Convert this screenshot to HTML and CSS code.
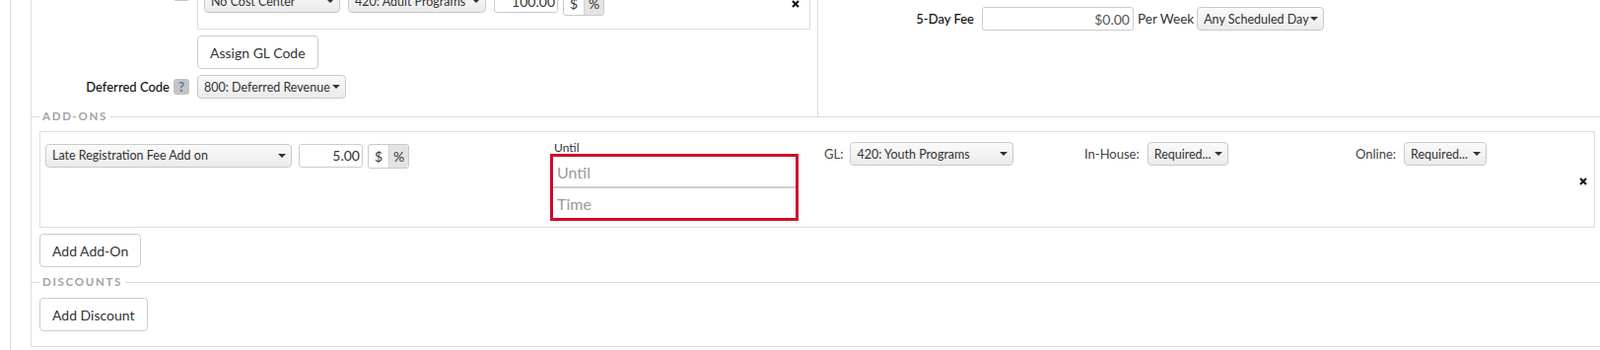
FILE: index.html
```html
<!DOCTYPE html>
<html lang="en">
<head>
  <meta charset="UTF-8" />
  <meta name="viewport" content="width=device-width, initial-scale=1.0" />
  <title>Program Fees</title>
  <link rel="stylesheet" href="styles.css">
</head>
<body>
  <div class="page">
    <div class="panel">
      <div class="top">
        <div class="col col-left">
          <div class="form-row row-gl">
            <div class="label"><span class="help">?</span></div>
            <div class="field">
              <div class="gl-box">
                <div class="controls">
                  <span class="select w-cost"><select><option>No Cost Center</option></select></span>
                  <span class="select w-prog"><select><option>420: Adult Programs</option></select></span>
                  <input class="amount" type="text" value="100.00">
                  <div class="toggle"><span>$</span><span class="on">%</span></div>
                </div>
                <span class="remove">
                  <svg viewBox="0 0 8 8"><path d="M1 1L7 7M7 1L1 7"/></svg>
                </span>
              </div>
              <button class="btn btn-assign">Assign GL Code</button>
            </div>
          </div>
          <div class="form-row row-deferred">
            <div class="label"><span>Deferred Code</span><span class="help">?</span></div>
            <div class="field">
              <span class="select w-def"><select><option>800: Deferred Revenue</option></select></span>
            </div>
          </div>
        </div>
        <div class="col col-right">
          <div class="fee-row">
            <div class="fee-label">5-Day Fee</div>
            <input class="fee-input" type="text" value="$0.00">
            <span class="per">Per Week</span>
            <span class="select w-day"><select><option>Any Scheduled Day</option></select></span>
          </div>
        </div>
      </div>

      <fieldset class="group group-addons">
        <legend>Add-ons</legend>
        <div class="addon">
          <div class="cell c-amount">
            <span class="select w-addon"><select><option>Late Registration Fee Add on</option></select></span>
            <input class="amount" type="text" value="5.00">
            <div class="toggle"><span>$</span><span class="on">%</span></div>
          </div>
          <div class="cell c-until">
            <label class="until-label">Until</label>
            <div class="until-box">
              <input type="text" placeholder="Until">
              <input type="text" placeholder="Time">
            </div>
          </div>
          <div class="cell c-gl">
            <span class="inline-label">GL:</span>
            <span class="select w-gl"><select><option>420: Youth Programs</option></select></span>
          </div>
          <div class="cell c-house">
            <span class="inline-label">In-House:</span>
            <span class="select w-req"><select><option>Required...</option></select></span>
          </div>
          <div class="cell c-online">
            <span class="inline-label">Online:</span>
            <span class="select w-req2"><select><option>Required...</option></select></span>
          </div>
          <span class="remove remove-addon">
            <svg viewBox="0 0 8 8"><path d="M1 1L7 7M7 1L1 7"/></svg>
          </span>
        </div>
        <button class="btn btn-addon">Add Add-On</button>
      </fieldset>

      <fieldset class="group group-discounts">
        <legend>Discounts</legend>
        <button class="btn btn-discount">Add Discount</button>
      </fieldset>
    </div>
  </div>
</body>
</html>
```

FILE: styles.css
```css
* { box-sizing: border-box; }

html, body {
  height: 100%;
  margin: 0;
  font-family: Lato, "Open Sans", sans-serif;
  font-size: 13px;
  color: #333;
  background: #fff;
  overflow: hidden;
}

.page {
  display: flow-root;
  height: 100%;
  margin-left: 10px;
  padding-left: 20px;
  border-left: 1px solid #ddd;
}

.panel {
  border-left: 1px solid #ddd;
  border-bottom: 1px solid #ddd;
}

/* top section, cut off by the viewport */
.top {
  display: flex;
  margin-top: -16px;
  height: 134px;
}

.col-left {
  width: 798px;
  border-right: 1px solid #ddd;
}

.col-right {
  flex: 1;
  padding-top: 23px;
}

.form-row {
  display: grid;
  grid-template-columns: 160px 1fr;
  column-gap: 8px;
}

.label {
  display: flex;
  justify-content: flex-end;
  align-items: center;
  gap: 4px;
  font-weight: 500;
  color: #111;
}

.row-gl .label {
  align-items: flex-start;
  height: 17px;
  padding-top: 1px;
}

.help {
  width: 16px;
  height: 16px;
  border-radius: 3px;
  background: #c4c4c4;
  color: #4a78a6;
  font-size: 13px;
  font-weight: 700;
  line-height: 16px;
  text-align: center;
}

.gl-box {
  width: 622px;
  display: flex;
  justify-content: space-between;
  align-items: flex-start;
  padding: 4px 10px 13px 6px;
  border: 1px solid #ddd;
}

.controls {
  display: flex;
  align-items: flex-start;
  gap: 8px;
}

.row-deferred {
  margin-top: 6px;
}

/* selects */
.select {
  position: relative;
  display: inline-block;
  height: 24px;
}

.select select {
  appearance: none;
  -webkit-appearance: none;
  width: 100%;
  height: 24px;
  margin: 0;
  padding: 0 12px 0 6px;
  border: 1px solid #c9c9c9;
  border-radius: 4px;
  background: linear-gradient(#fafafa, #ebebeb);
  font-family: inherit;
  font-size: 12.5px;
  color: #333;
}

.select::after {
  content: "";
  position: absolute;
  right: 6px;
  top: 10px;
  border-left: 4px solid transparent;
  border-right: 4px solid transparent;
  border-top: 4px solid #333;
  pointer-events: none;
}

.w-cost { width: 138px; }
.w-prog { width: 140px; }
.w-def { width: 151px; }
.w-day { width: 129px; }
.w-addon { width: 250px; }
.w-gl { width: 166px; }
.w-req { width: 82px; }
.w-req2 { width: 84px; }

.amount {
  width: 65px;
  height: 24px;
  padding: 0 2px 0 4px;
  border: 1px solid #ccc;
  border-radius: 3px;
  text-align: right;
  font-family: inherit;
  font-size: 14px;
  color: #333;
}

.toggle {
  display: flex;
  height: 25px;
  margin-top: 2px;
  margin-left: -3px;
  border: 1px solid #c9c9c9;
  border-radius: 3px;
  overflow: hidden;
}

.toggle span {
  width: 20px;
  line-height: 23px;
  text-align: center;
  font-size: 14px;
  color: #333;
}

.toggle .on {
  background: #e3e3e3;
  border-left: 1px solid #d2d2d2;
}

.remove {
  display: inline-flex;
  margin-top: 11px;
}

.remove svg {
  width: 8px;
  height: 8px;
  stroke: #1a1a1a;
  stroke-width: 2.2;
  fill: none;
}

.btn {
  display: block;
  height: 34px;
  padding: 0 12px;
  border: 1px solid #ccc;
  border-radius: 4px;
  background: #fff;
  font-family: inherit;
  font-size: 14px;
  color: #333;
}

.btn-assign { margin-top: 6px; }

/* right column */
.fee-row {
  display: flex;
  align-items: center;
}

.fee-label {
  width: 159px;
  padding-right: 1px;
  text-align: right;
  font-weight: 500;
  color: #111;
}

.fee-input {
  width: 154px;
  height: 24px;
  margin-left: 7px;
  padding: 0 3px;
  border: 1px solid #ccc;
  border-radius: 3px;
  text-align: right;
  font-family: inherit;
  font-size: 14px;
  color: #555;
}

.per {
  margin: 0 3px 0 4px;
  font-size: 13.5px;
}

/* fieldset groups */
.group {
  margin: 0;
  min-width: 0;
  padding: 0 5px 8px 8px;
  border: 0;
  border-top: 1px solid #ddd;
}

.group-addons { margin-top: -7px; }
.group-discounts { padding-bottom: 15px; }

.group legend {
  padding: 0 3px;
  line-height: 14px;
  font-size: 11.5px;
  font-weight: 700;
  letter-spacing: 1.7px;
  text-transform: uppercase;
  color: #a3a3a3;
}

.addon {
  display: flex;
  align-items: flex-start;
  margin-top: 8px;
  padding: 10px 7px 6px 5px;
  border: 1px solid #ddd;
}

.cell {
  display: flex;
  align-items: center;
}

.c-amount { width: 512px; gap: 7px; }
.c-amount .toggle { margin-left: -2px; }
.c-until { width: 278px; flex-direction: column; align-items: flex-start; }
.c-gl { width: 264px; gap: 7px; }
.c-house { width: 275px; gap: 8px; }
.c-online { flex: 1; gap: 8px; }

.inline-label {
  color: #444;
}

.until-label {
  font-size: 12px;
  line-height: 12px;
  padding-left: 4px;
  color: #333;
}

.until-box {
  width: 252px;
  border: 3px solid #cf0a2c;
}

.until-box input {
  display: block;
  width: 100%;
  height: 30px;
  padding: 0 4px;
  border: 0;
  font-family: inherit;
  font-size: 16px;
  color: #333;
  outline: none;
}

.until-box input:first-child {
  border-bottom: 2px solid #cdcdcd;
  height: 32px;
}

.until-box input::placeholder {
  color: #9a9a9a;
}

.remove-addon {
  align-self: center;
  margin-top: 0;
}

.btn-addon { margin-top: 6px; }
.btn-discount { margin-top: 9px; }
```
